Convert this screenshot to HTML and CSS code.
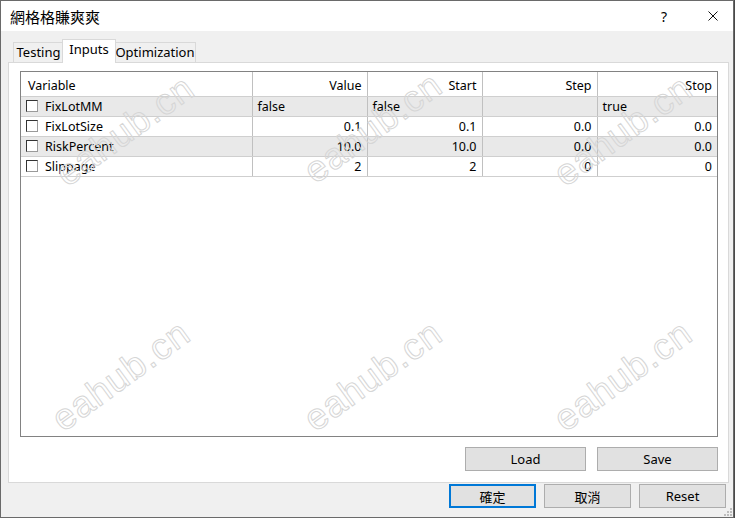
FILE: index.html
```html
<!DOCTYPE html>
<html lang="zh-Hant">
<head>
  <meta charset="UTF-8" />
  <meta name="viewport" content="width=device-width, initial-scale=1" />
  <title>網格格賺爽爽</title>
  <link rel="stylesheet" href="styles.css">
</head>
<body>
  <div class="window">
    <div class="titlebar">
      <span class="title">網格格賺爽爽</span>
      <span class="help">?</span>
      <span class="close">
        <svg width="10" height="10" viewBox="0 0 10 10"><path d="M0.5 0.5 L9.5 9.5 M9.5 0.5 L0.5 9.5" stroke="#111" stroke-width="1" fill="none"/></svg>
      </span>
    </div>

    <div class="tabs">
      <div class="tab tab-testing">Testing</div>
      <div class="tab tab-inputs active">Inputs</div>
      <div class="tab tab-opt">Optimization</div>
    </div>

    <div class="panel">
      <div class="grid-box">
        <table class="inputs">
          <colgroup>
            <col class="c-var"><col class="c-num"><col class="c-num"><col class="c-num"><col>
          </colgroup>
          <thead>
            <tr>
              <th class="left">Variable</th>
              <th>Value</th>
              <th>Start</th>
              <th>Step</th>
              <th>Stop</th>
            </tr>
          </thead>
          <tbody>
            <tr class="shade">
              <td class="name"><span class="check"></span>FixLotMM</td>
              <td class="left">false</td>
              <td class="left">false</td>
              <td></td>
              <td class="left">true</td>
            </tr>
            <tr>
              <td class="name"><span class="check"></span>FixLotSize</td>
              <td>0.1</td>
              <td>0.1</td>
              <td>0.0</td>
              <td>0.0</td>
            </tr>
            <tr class="shade">
              <td class="name"><span class="check"></span>RiskPercent</td>
              <td>10.0</td>
              <td>10.0</td>
              <td>0.0</td>
              <td>0.0</td>
            </tr>
            <tr>
              <td class="name"><span class="check"></span>Slippage</td>
              <td>2</td>
              <td>2</td>
              <td>0</td>
              <td>0</td>
            </tr>
          </tbody>
        </table>
      </div>
      <div class="panel-actions">
        <button class="btn wide">Load</button>
        <button class="btn wide">Save</button>
      </div>
    </div>

    <div class="dialog-actions">
      <button class="btn default">確定</button>
      <button class="btn">取消</button>
      <button class="btn">Reset</button>
    </div>

    <svg class="grip" width="8" height="8" viewBox="0 0 8 8">
      <rect x="6" y="0" width="2" height="2" fill="#bdbdbd"/>
      <rect x="3" y="3" width="2" height="2" fill="#bdbdbd"/>
      <rect x="6" y="3" width="2" height="2" fill="#bdbdbd"/>
      <rect x="0" y="6" width="2" height="2" fill="#bdbdbd"/>
      <rect x="3" y="6" width="2" height="2" fill="#bdbdbd"/>
      <rect x="6" y="6" width="2" height="2" fill="#bdbdbd"/>
    </svg>

    <span class="wm wm-1">eahub.cn</span>
    <span class="wm wm-2">eahub.cn</span>
    <span class="wm wm-3">eahub.cn</span>
    <span class="wm wm-4">eahub.cn</span>
    <span class="wm wm-5">eahub.cn</span>
    <span class="wm wm-6">eahub.cn</span>
  </div>
</body>
</html>
```

FILE: styles.css
```css
body {
  margin: 0;
  background: #4a4a4a;
  font-family: 'Noto Sans', 'Noto Sans CJK TC', sans-serif;
  font-size: 12.5px;
  color: #000;
}
.window {
  position: relative;
  width: 734px;
  height: 518px;
  box-sizing: border-box;
  border: 1px solid #6a6a6a;
  background: #f0f0f0;
  overflow: hidden;
}
.titlebar {
  display: flex;
  align-items: center;
  height: 30px;
  padding-left: 9px;
  background: #fff;
}
.title {
  font-family: 'Noto Sans CJK TC', sans-serif;
  font-size: 15px;
}
.help {
  margin-left: auto;
  margin-right: 41px;
  font-size: 14px;
}
.close {
  display: flex;
  margin-right: 15px;
}

/* tabs */
.tabs {
  display: flex;
  align-items: flex-end;
  height: 23px;
  margin-top: 8px;
  padding-left: 12px;
}
.tab {
  position: relative;
  height: 20px;
  box-sizing: border-box;
  border: 1px solid #d9d9d9;
  border-bottom: none;
  background: #f0f0f0;
  font-size: 13px;
  line-height: 19px;
  text-align: center;
}
.tab-testing { width: 51px; }
.tab-inputs { width: 54px; }
.tab-opt { width: 82px; }
.tab.active {
  height: 24px;
  margin: 0 -2px -1px;
  background: #fff;
  z-index: 1;
  line-height: 19px;
}

/* panel */
.panel {
  width: 721px;
  height: 421px;
  box-sizing: border-box;
  margin-left: 7px;
  padding: 8px 10px 0 11px;
  background: #fff;
  border: 1px solid #d9d9d9;
}
.grid-box {
  height: 366px;
  box-sizing: border-box;
  border: 1px solid #828282;
}
.inputs {
  width: 100%;
  table-layout: fixed;
  border-collapse: collapse;
}
.c-var { width: 231px; }
.c-num { width: 115px; }
.inputs th,
.inputs td {
  padding: 0 5px;
  text-align: right;
  font-weight: normal;
  border-right: 1px solid #c0c0c0;
  border-bottom: 1px solid #cfcfcf;
  white-space: nowrap;
}
.inputs th:last-child,
.inputs td:last-child {
  border-right: none;
}
.inputs th {
  height: 24px;
  padding-top: 3px;
  box-sizing: border-box;
}
.inputs td {
  height: 19px;
  line-height: 17px;
}
.inputs .left {
  text-align: left;
}
.inputs .name {
  text-align: left;
  padding-left: 5px;
}
.inputs th.left {
  padding-left: 7px;
}
.inputs tr.shade td {
  background: #e9e9e9;
}
.check {
  display: inline-block;
  width: 10px;
  height: 10px;
  margin-right: 7px;
  vertical-align: -1px;
  border-top: 1px solid #333;
  border-left: 1px solid #333;
  border-right: 1px solid #9a9a9a;
  border-bottom: 1px solid #9a9a9a;
  background: #fff;
}

/* buttons */
.btn {
  height: 24px;
  box-sizing: border-box;
  padding: 0;
  border: 1px solid #adadad;
  background: #e1e1e1;
  font-family: 'Noto Sans', 'Noto Sans CJK TC', sans-serif;
  font-size: 13px;
  color: #000;
}
.panel-actions {
  display: flex;
  justify-content: flex-end;
  gap: 11px;
  margin-top: 10px;
}
.btn.wide {
  width: 121px;
}
.dialog-actions {
  display: flex;
  justify-content: flex-end;
  gap: 8px;
  margin-top: 1px;
  padding-right: 7px;
}
.dialog-actions .btn {
  width: 87px;
}
.btn.default {
  border: 2px solid #0078d7;
}
.grip {
  position: absolute;
  right: 1px;
  bottom: 1px;
}

/* watermark */
.wm {
  position: absolute;
  font-family: 'Liberation Sans', sans-serif;
  font-size: 37px;
  letter-spacing: 1px;
  color: transparent;
  -webkit-text-stroke: 1px #d6d6d6;
  transform: translate(-50%, -50%) rotate(-36deg);
  pointer-events: none;
  white-space: nowrap;
}
.wm-1 { left: 124px; top: 130px; }
.wm-2 { left: 372px; top: 127px; }
.wm-3 { left: 622px; top: 130px; }
.wm-4 { left: 120px; top: 375px; }
.wm-5 { left: 372px; top: 375px; }
.wm-6 { left: 622px; top: 375px; }
```
